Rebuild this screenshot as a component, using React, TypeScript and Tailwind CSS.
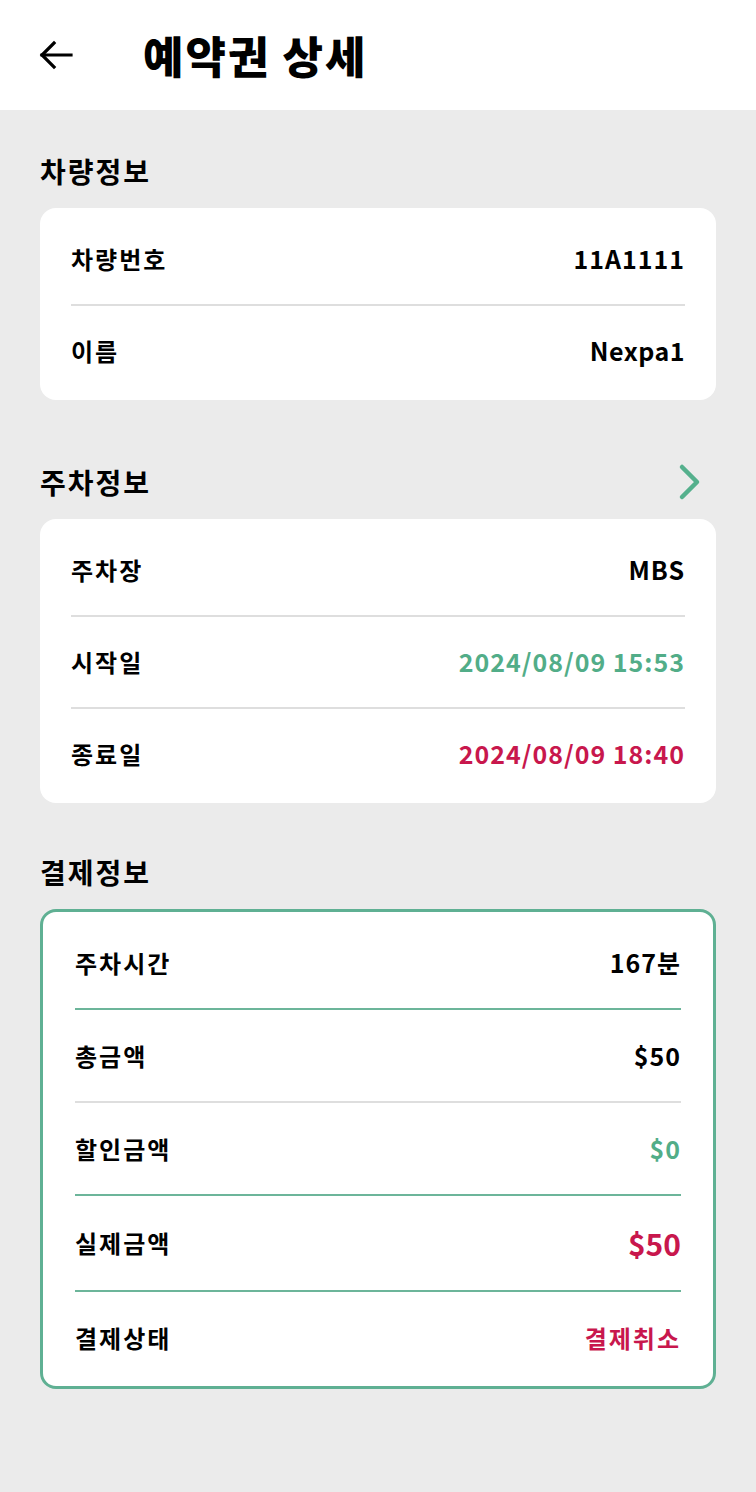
import React from "react";

const font = { fontFamily: '"Noto Sans CJK KR", "Noto Sans", sans-serif' };

function Row({ label, value, valueClass = "text-black", h = "h-[90px]" }: { label: string; value: string; valueClass?: string; h?: string }) {
  return (
    <div className={`flex items-center justify-between ${h}`}>
      <span className="text-[24px] font-bold text-black tracking-[2px]">{label}</span>
      <span className={`font-bold ${valueClass}`}>{value}</span>
    </div>
  );
}

function Divider({ color = "bg-[#dedede]" }: { color?: string }) {
  return <div className={`h-[2px] ${color}`} />;
}

export default function App() {
  return (
    <div className="min-h-[1492px] w-[756px] bg-[#ebebeb]" style={font}>
      <header className="flex h-[110px] items-center bg-white">
        <div className="ml-[38px] flex h-[36px] w-[36px] items-center justify-center">
          <svg width="34" height="32" viewBox="0 0 34 32" fill="none" stroke="black" strokeWidth="3.2" strokeLinecap="square">
            <path d="M3 16 H32" />
            <path d="M15 4 L3 16 L15 28" />
          </svg>
        </div>
        <h1 className="ml-[69px] text-[44px] font-black tracking-[2px] text-black">예약권 상세</h1>
      </header>

      <div className="px-[40px]">
        <div className="flex h-[98px] items-end pb-[16px]">
          <h2 className="text-[28px] font-bold tracking-[2px] text-black">차량정보</h2>
        </div>
        <div className="rounded-[16px] bg-white px-[31px] pt-[6px] pb-[4px]">
          <Row label="차량번호" value="11A1111" valueClass="text-black text-[25px] tracking-[1px]" />
          <Divider />
          <Row label="이름" value="Nexpa1" valueClass="text-black text-[25px] tracking-[0.5px]" />
        </div>

        <div className="flex h-[119px] items-end justify-between pb-[16px]">
          <h2 className="text-[28px] font-bold tracking-[2px] text-black">주차정보</h2>
          <svg width="24" height="38" viewBox="0 0 24 38" fill="none" stroke="#55b08d" strokeWidth="4.5" strokeLinecap="round" strokeLinejoin="round" className="mr-[14px] mb-[2px]">
            <path d="M4 4 L19 19 L4 34" />
          </svg>
        </div>
        <div className="rounded-[16px] bg-white px-[31px] pt-[6px] pb-[4px]">
          <Row label="주차장" value="MBS" valueClass="text-black text-[25px] tracking-[1px]" />
          <Divider />
          <Row label="시작일" value="2024/08/09 15:53" valueClass="text-[#52ad88] text-[25px] tracking-[1px]" />
          <Divider />
          <Row label="종료일" value="2024/08/09 18:40" valueClass="text-[#c8174d] text-[25px] tracking-[1px]" />
        </div>

        <div className="flex h-[106px] items-end pb-[16px]">
          <h2 className="text-[28px] font-bold tracking-[2px] text-black">결제정보</h2>
        </div>
        <div className="rounded-[16px] border-[3px] border-[#5fb093] bg-white px-[32px] pt-[6px] pb-[2px]">
          <Row label="주차시간" value="167분" valueClass="text-black text-[25px] tracking-[1px]" h="h-[90px]" />
          <Divider color="bg-[#6cb59a]" />
          <Row label="총금액" value="$50" valueClass="text-black text-[25px] tracking-[1px]" h="h-[91px]" />
          <Divider />
          <Row label="할인금액" value="$0" valueClass="text-[#52ad88] text-[25px] tracking-[1px]" h="h-[91px]" />
          <Divider color="bg-[#6cb59a]" />
          <Row label="실제금액" value="$50" valueClass="text-[#c8174d] text-[30px]" h="h-[94px]" />
          <Divider color="bg-[#6cb59a]" />
          <Row label="결제상태" value="결제취소" valueClass="text-[#c8174d] text-[24px] tracking-[2px]" h="h-[92px]" />
        </div>
      </div>
    </div>
  );
}
